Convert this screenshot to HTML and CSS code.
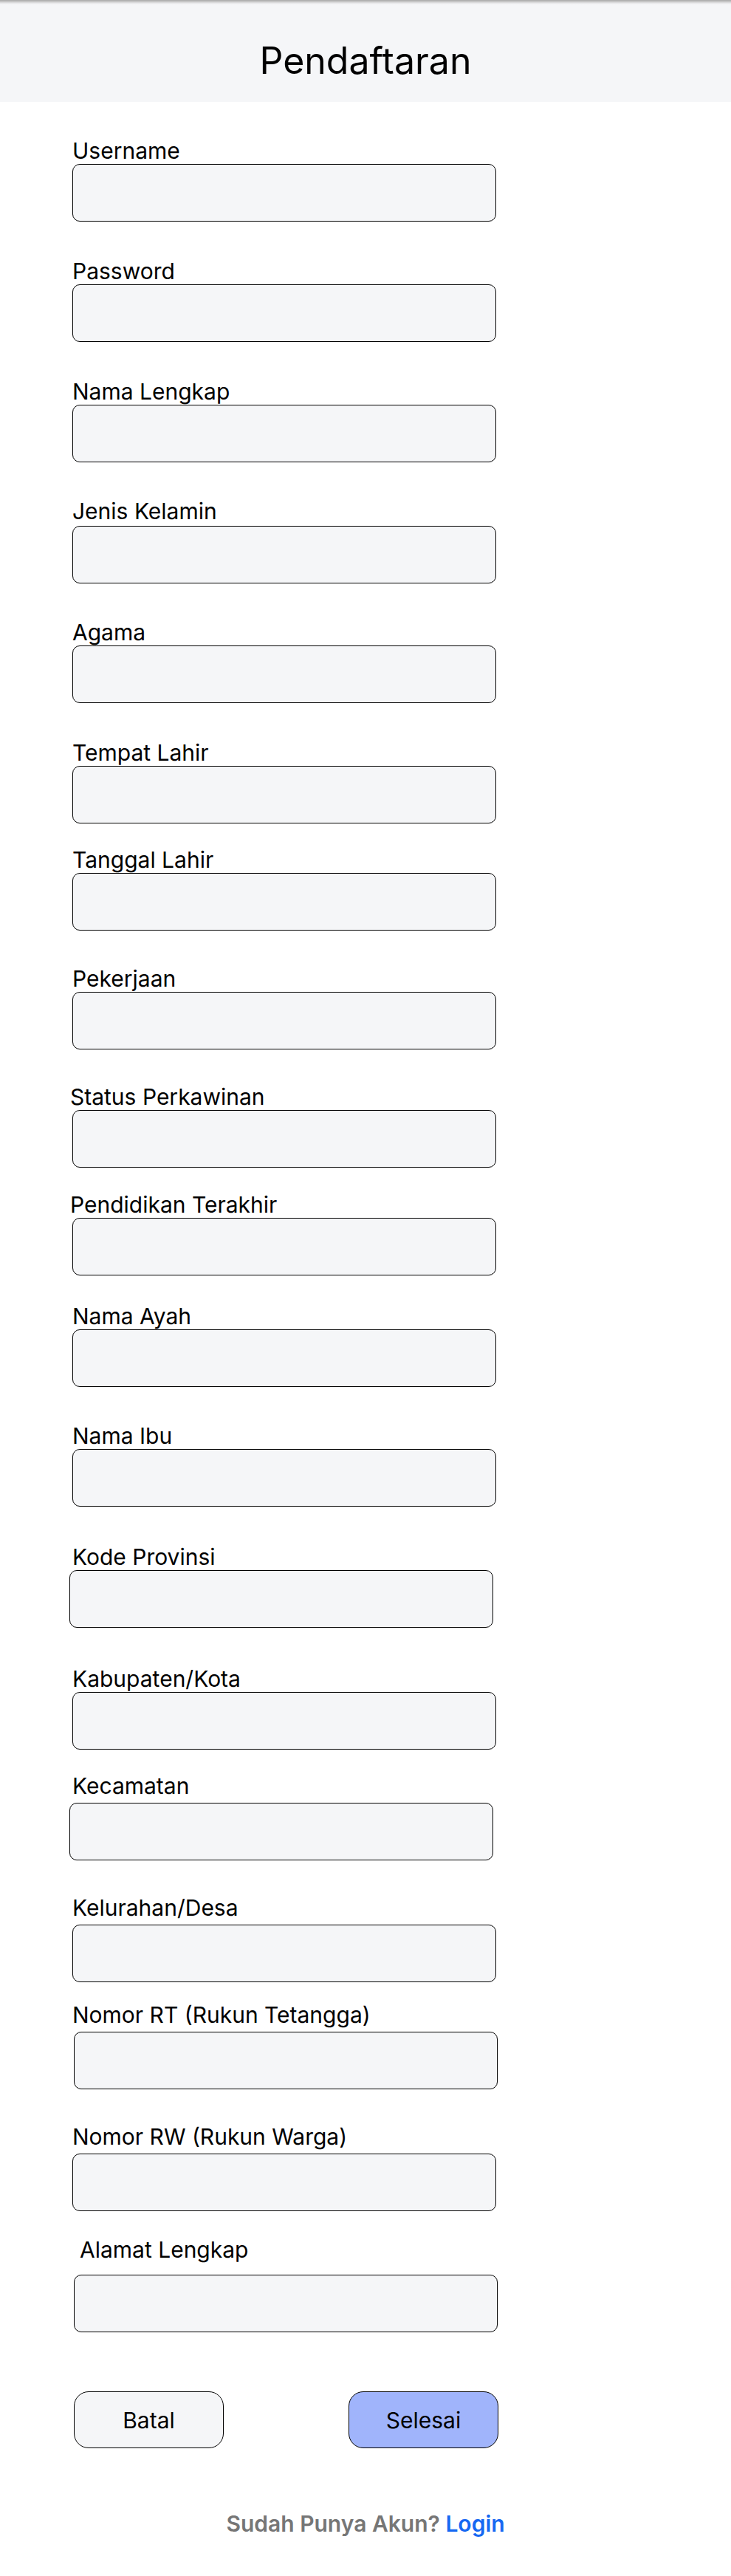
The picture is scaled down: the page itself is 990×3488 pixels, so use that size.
FILE: index.html
```html
<!DOCTYPE html>
<html lang="id">
<head>
<meta charset="utf-8">
<title>Pendaftaran</title>
<link rel="stylesheet" href="styles.css">
</head>
<body>
<header class="header">
  <h1 class="title">Pendaftaran</h1>
</header>
<main class="form">
  <div class="field mt-48"><label class="label">Username</label><input class="input" type="text"></div>
  <div class="field mt-49"><label class="label">Password</label><input class="input" type="password"></div>
  <div class="field mt-49"><label class="label">Nama Lengkap</label><input class="input" type="text"></div>
  <div class="field mt-48"><label class="label lb-2">Jenis Kelamin</label><input class="input" type="text"></div>
  <div class="field mt-48"><label class="label">Agama</label><input class="input" type="text"></div>
  <div class="field mt-49"><label class="label">Tempat Lahir</label><input class="input" type="text"></div>
  <div class="field mt-31"><label class="label">Tanggal Lahir</label><input class="input" type="text"></div>
  <div class="field mt-47"><label class="label">Pekerjaan</label><input class="input" type="text"></div>
  <div class="field mt-46"><label class="label label--out">Status Perkawinan</label><input class="input" type="text"></div>
  <div class="field mt-32"><label class="label label--out">Pendidikan Terakhir</label><input class="input" type="text"></div>
  <div class="field mt-37"><label class="label">Nama Ayah</label><input class="input" type="text"></div>
  <div class="field mt-48"><label class="label">Nama Ibu</label><input class="input" type="text"></div>
  <div class="field mt-50"><label class="label">Kode Provinsi</label><input class="input input--left" type="text"></div>
  <div class="field mt-51"><label class="label">Kabupaten/Kota</label><input class="input" type="text"></div>
  <div class="field mt-31"><label class="label lb-5">Kecamatan</label><input class="input input--left" type="text"></div>
  <div class="field mt-46"><label class="label lb-5">Kelurahan/Desa</label><input class="input" type="text"></div>
  <div class="field mt-26"><label class="label lb-5">Nomor RT (Rukun Tetangga)</label><input class="input input--right" type="text"></div>
  <div class="field mt-46"><label class="label lb-5">Nomor RW (Rukun Warga)</label><input class="input" type="text"></div>
  <div class="field mt-34"><label class="label label--in lb-16">Alamat Lengkap</label><input class="input input--right" type="text"></div>

  <div class="actions">
    <button class="btn btn--cancel" type="button">Batal</button>
    <button class="btn btn--submit" type="submit">Selesai</button>
  </div>

  <p class="footer">Sudah Punya Akun? <a class="link" href="#">Login</a></p>
</main>
</body>
</html>
```

FILE: styles.css
```css
* { box-sizing: border-box; }

html, body {
  margin: 0;
  padding: 0;
  background: #ffffff;
  font-family: Inter, "Noto Sans", "Liberation Sans", sans-serif;
  color: #000;
}

body {
  width: 990px;
  min-height: 3488px;
}

.header {
  height: 138px;
  padding-top: 52px;
  background: linear-gradient(#a8a8a8 0, #c4c4c4 2px, #e4e4e6 4px, #f5f6f8 6px, #f5f6f8 100%);
}

.title {
  margin: 0;
  font-size: 50px;
  line-height: 60px;
  font-weight: 400;
  text-align: center;
}

.form {
  padding-left: 98px;
  display: flex;
  flex-direction: column;
}

.field {
  display: flex;
  flex-direction: column;
  align-items: flex-start;
}

.label {
  font-size: 30px;
  line-height: 36px;
  font-weight: 400;
}

.label--out { margin-left: -3px; }
.label--in { padding-left: 10px; }

.lb-2 { margin-bottom: 2px; }
.lb-5 { margin-bottom: 5px; }
.lb-16 { margin-bottom: 16px; }

.input {
  width: 574px;
  height: 78px;
  margin: 0;
  border: 1px solid #000;
  border-radius: 10px;
  background: #f5f6f8;
  font: inherit;
  padding: 0 16px;
}

.input--left { margin-left: -4px; }
.input--right { margin-left: 2px; }

.mt-26 { margin-top: 26px; }
.mt-31 { margin-top: 31px; }
.mt-32 { margin-top: 32px; }
.mt-34 { margin-top: 34px; }
.mt-37 { margin-top: 37px; }
.mt-46 { margin-top: 46px; }
.mt-47 { margin-top: 47px; }
.mt-48 { margin-top: 48px; }
.mt-49 { margin-top: 49px; }
.mt-50 { margin-top: 50px; }
.mt-51 { margin-top: 51px; }

.actions {
  margin-top: 80px;
  margin-left: 2px;
  width: 575px;
  display: flex;
  justify-content: space-between;
}

.btn {
  width: 203px;
  height: 77px;
  border: 1px solid #000;
  border-radius: 20px;
  font-family: inherit;
  font-size: 30px;
  color: #000;
  padding: 0;
}

.btn--cancel { background: #f5f6f8; }
.btn--submit { background: #a0b4fb; }

.footer {
  margin: 84px 0 0 -98px;
  width: 990px;
  text-align: center;
  font-size: 30px;
  line-height: 36px;
  font-weight: 600;
  color: #767676;
}

.link {
  color: #1668f2;
  text-decoration: none;
}
```
